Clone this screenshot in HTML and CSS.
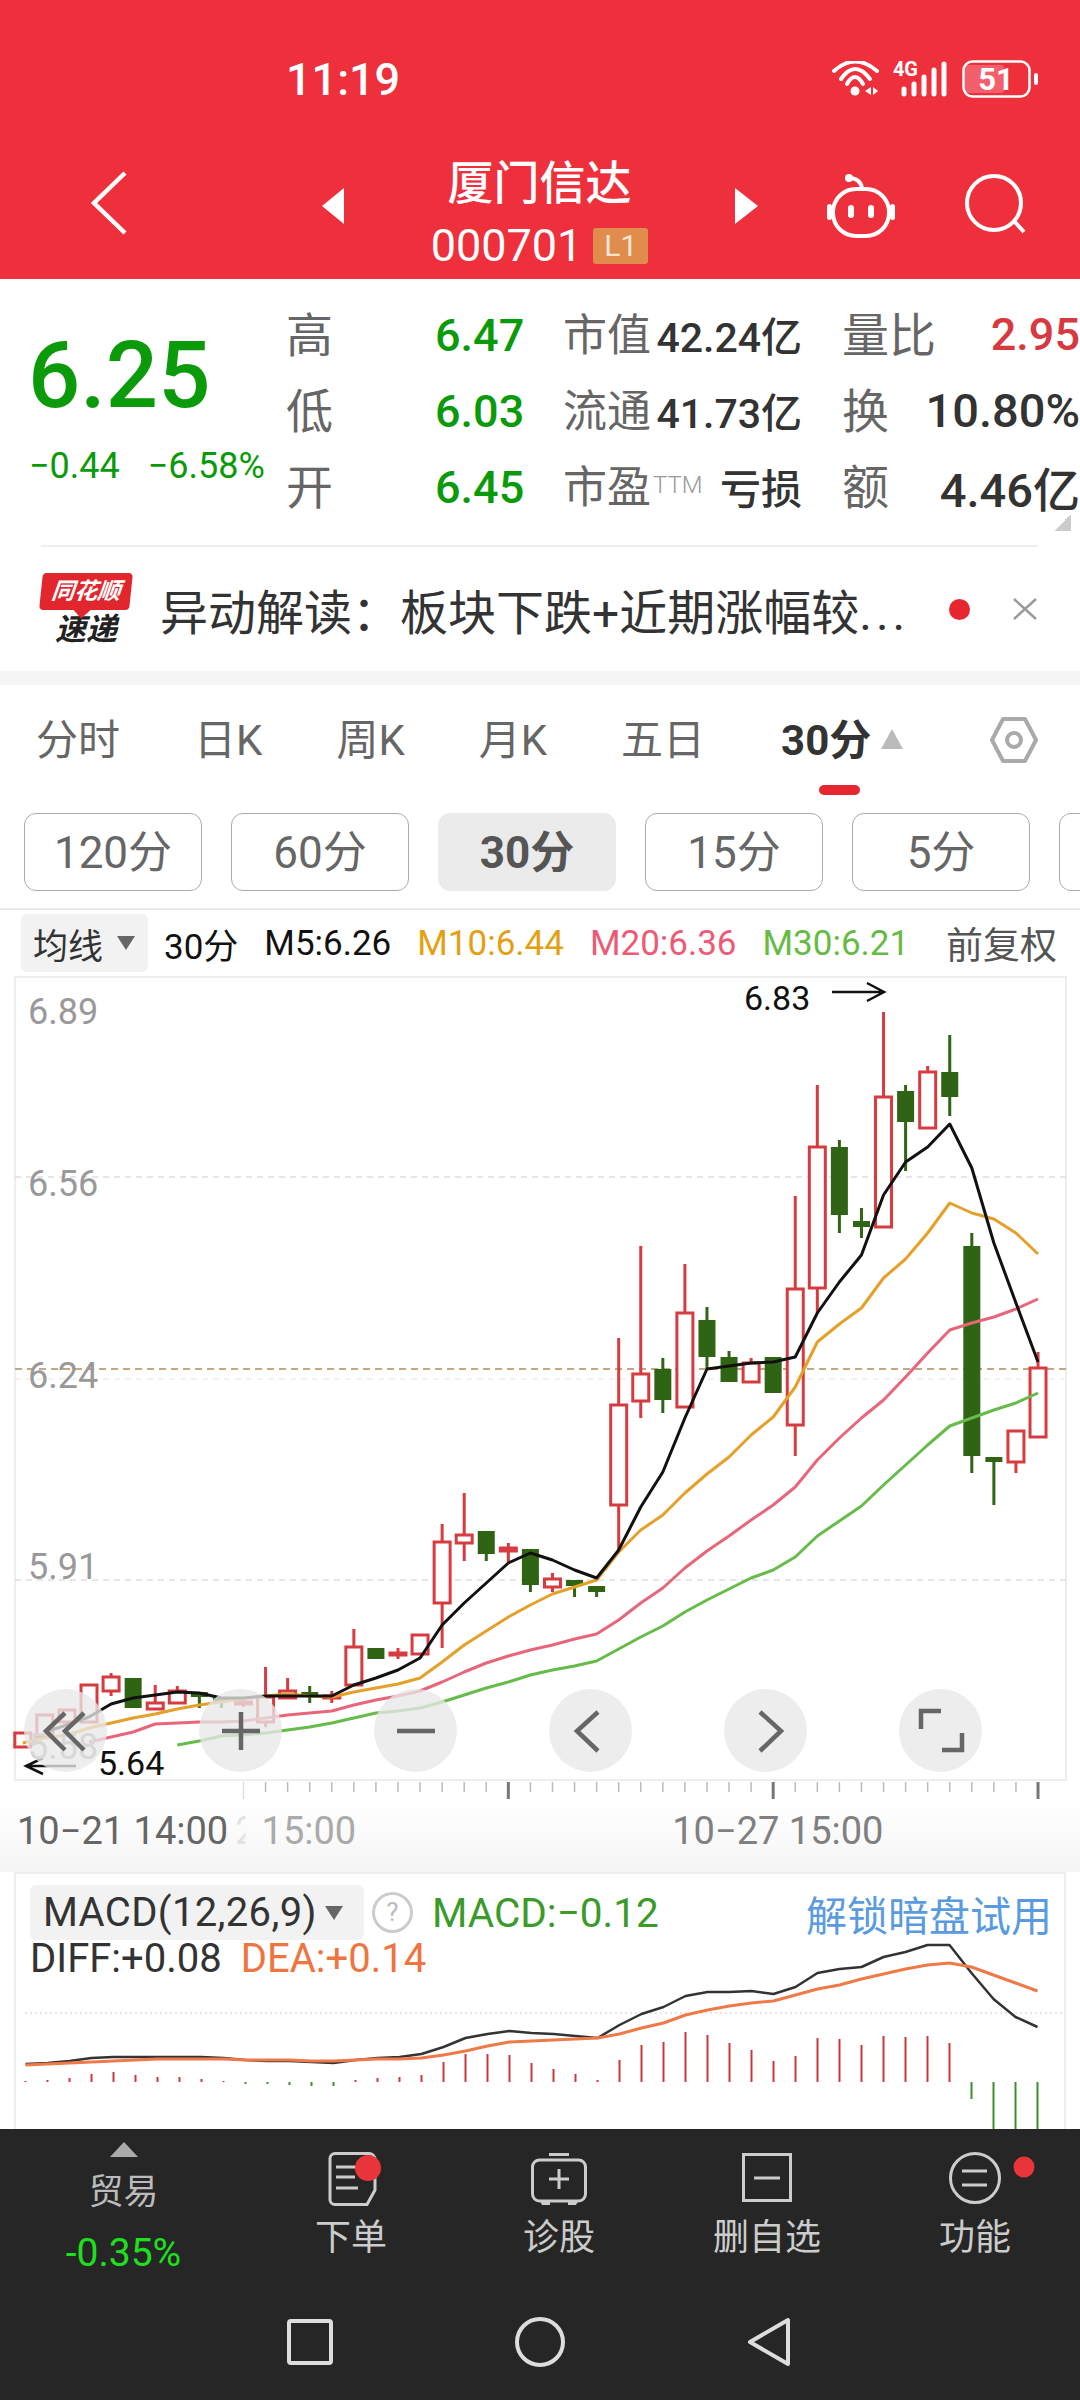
FILE: index.html
```html
<!DOCTYPE html>
<html lang="zh-CN">
<head>
<meta charset="UTF-8">
<meta name="viewport" content="width=device-width, initial-scale=1.0">
<title>厦门信达</title>
<link rel="stylesheet" href="styles.css">
</head>
<body>

<!-- 顶部红色区域 -->
<header class="top">
    <div class="status">
        <span class="clock">11:19</span>
        <svg class="wifi" width="47" height="35" viewBox="0 0 47 35">
            <g fill="none" stroke="#fff" stroke-width="4" stroke-linecap="round">
                <path d="M2 10Q23 -9 45 10"/>
                <path d="M9 18Q23 -2 38 18"/>
                <path d="M15 23Q23 9 31 23"/>
            </g>
            <circle cx="23" cy="30" r="4.5" fill="#fff"/>
            <path d="M33 30l6-4v8zM41 26l5 4-5 4z" fill="#fff"/>
        </svg>
        <svg class="signal" width="55" height="44" viewBox="0 -4 55 44">
            <text x="0" y="15" class="signal-text" textLength="25">4G</text>
            <g fill="none" stroke="#fff" stroke-width="5" stroke-linecap="round">
                <path d="M11 28v5M21 23v10M31 16v17M41 9v24M51 3v30"/>
            </g>
        </svg>
        <svg class="battery" width="76" height="38" viewBox="0 0 76 38">
            <rect x="3" y="5" width="39" height="28" rx="3" fill="#f2606b"/>
            <rect x="1.5" y="1.5" width="66" height="35" rx="9" fill="none" stroke="#fff" stroke-width="2.5"/>
            <text x="34" y="30" class="battery-text" text-anchor="middle">51</text>
            <rect x="72" y="13" width="4" height="12" rx="2" fill="#fff"/>
        </svg>
    </div>
    <div class="toolbar">
        <svg class="back" width="36" height="64" viewBox="0 0 36 64">
            <path d="M34 2L3 32l31 30" fill="none" stroke="#fff" stroke-width="4.5"/>
        </svg>
        <svg class="prev" width="22" height="36" viewBox="0 0 22 36"><path d="M22 0v36L0 18z" fill="#fff"/></svg>
        <div class="stock">
            <div class="stock-name">厦门信达</div>
            <div class="stock-code">000701<span class="level">L1</span></div>
        </div>
        <svg class="next" width="23" height="36" viewBox="0 0 23 36"><path d="M0 0v36l23-18z" fill="#fff"/></svg>
        <svg class="robot" width="68" height="64" viewBox="0 0 68 64">
            <g fill="none" stroke="#fff" stroke-width="4">
                <path d="M22 4q11 0 13 10"/>
                <rect x="6" y="15" width="56" height="47" rx="23"/>
            </g>
            <circle cx="22" cy="4" r="4" fill="#fff"/>
            <rect x="0" y="30" width="5" height="16" rx="2.5" fill="#fff"/>
            <rect x="63" y="30" width="5" height="16" rx="2.5" fill="#fff"/>
            <rect x="21" y="31" width="6" height="13" rx="3" fill="#fff"/>
            <rect x="41" y="31" width="6" height="13" rx="3" fill="#fff"/>
        </svg>
        <svg class="search" width="62" height="64" viewBox="0 0 62 64">
            <circle cx="29" cy="29" r="27" fill="none" stroke="#fff" stroke-width="4"/>
            <path d="M49 47l10 11" fill="none" stroke="#fff" stroke-width="4"/>
        </svg>
    </div>
</header>

<!-- 行情数据 -->
<section class="quote">
    <div class="price-box">
        <div class="price">6.25</div>
        <div class="change"><span>−0.44</span><span>−6.58%</span></div>
    </div>
    <div class="quote-grid">
        <span class="q-label">高</span><span class="q-val">6.47</span>
        <span class="q-mid"><span class="q-small">市值</span><b>42.24亿</b></span>
        <span class="q-end"><span class="q-label">量比</span><b class="red">2.95</b></span>

        <span class="q-label">低</span><span class="q-val">6.03</span>
        <span class="q-mid"><span class="q-small">流通</span><b>41.73亿</b></span>
        <span class="q-end"><span class="q-label">换</span><b>10.80%</b></span>

        <span class="q-label">开</span><span class="q-val">6.45</span>
        <span class="q-mid"><span class="q-small">市盈<i class="ttm">TTM</i></span><b>亏损</b></span>
        <span class="q-end"><span class="q-label">额</span><b>4.46亿</b></span>
    </div>
    <div class="corner"></div>
</section>

<!-- 速递 -->
<section class="news">
    <div class="logo">
        <div class="logo-tag">同花顺</div>
        <div class="logo-text">速递</div>
    </div>
    <div class="news-text">异动解读：板块下跌+近期涨幅较<span class="dots">...</span></div>
    <span class="news-dot"></span>
    <svg class="news-close" width="26" height="24" viewBox="0 0 26 24">
        <path d="M2 2l22 20M24 2L2 22" fill="none" stroke="#999" stroke-width="2.5"/>
    </svg>
</section>
<div class="band"></div>

<!-- 周期切换 -->
<nav class="tabs">
    <span class="tab">分时</span>
    <span class="tab">日K</span>
    <span class="tab">周K</span>
    <span class="tab">月K</span>
    <span class="tab">五日</span>
    <span class="tab active">30分<i class="tab-arrow"></i></span>
    <svg class="hex" width="48" height="46" viewBox="0 0 48 46">
        <path d="M13 2h22l11 21-11 21H13L2 23z" fill="none" stroke="#aaa" stroke-width="4" stroke-linejoin="round"/>
        <circle cx="24" cy="23" r="7" fill="none" stroke="#aaa" stroke-width="4"/>
    </svg>
</nav>
<div class="periods">
    <span class="period">120分</span>
    <span class="period">60分</span>
    <span class="period active">30分</span>
    <span class="period">15分</span>
    <span class="period">5分</span>
    <span class="period"></span>
</div>

<!-- 均线 -->
<div class="legend">
    <span class="legend-btn">均线<i class="down"></i></span>
    <span class="legend-item l-period">30分</span>
    <span class="legend-item">M5:6.26</span>
    <span class="legend-item m10">M10:6.44</span>
    <span class="legend-item m20">M20:6.36</span>
    <span class="legend-item m30">M30:6.21</span>
    <span class="legend-item fq">前复权</span>
</div>

<!-- K线图 -->
<div class="chart">
    <svg id="kline" class="kline" width="1080" height="824" viewBox="0 976 1080 824"></svg>
    <span class="axis-label y1">6.89</span>
    <span class="axis-label y2">6.56</span>
    <span class="axis-label y3">6.24</span>
    <span class="axis-label y4">5.91</span>
    <span class="axis-label y5">5.58</span>
    <span class="mark hi">6.83</span>
    <span class="mark lo">5.64</span>

    <button class="round r1">
        <svg width="83" height="83" viewBox="0 0 83 83"><path d="M41 24L22 42l19 19M60 24L41 42l19 19" class="ico"/></svg>
    </button>
    <button class="round r2">
        <svg width="83" height="83" viewBox="0 0 83 83"><path d="M23 42h38M42 23v38" class="ico"/></svg>
    </button>
    <button class="round r3">
        <svg width="83" height="83" viewBox="0 0 83 83"><path d="M23 42h38" class="ico"/></svg>
    </button>
    <button class="round r4">
        <svg width="83" height="83" viewBox="0 0 83 83"><path d="M49 23L28 42l21 20" class="ico"/></svg>
    </button>
    <button class="round r5">
        <svg width="83" height="83" viewBox="0 0 83 83"><path d="M36 23l21 19-21 20" class="ico"/></svg>
    </button>
    <button class="round r6">
        <svg width="83" height="83" viewBox="0 0 83 83"><path d="M42 22H22v18M43 61h20V44" class="ico"/></svg>
    </button>
</div>

<div class="times">
    <span class="time t1">10−21 14:00</span>
    <span class="time t2">2</span>
    <span class="time t3">15:00</span>
    <span class="time t4">10−27 15:00</span>
</div>

<!-- MACD -->
<section class="macd">
    <svg id="macdChart" class="macd-chart" width="1050" height="255" viewBox="16 1874 1050 255"></svg>
    <div class="macd-head">
        <span class="macd-btn">MACD(12,26,9)<i class="down"></i></span>
        <span class="help">?</span>
        <span class="macd-val">MACD:−0.12</span>
        <span class="unlock">解锁暗盘试用</span>
    </div>
    <div class="macd-sub"><span>DIFF:+0.08</span><span class="dea">DEA:+0.14</span></div>
</section>

<!-- 底部操作栏 -->
<footer class="bottom">
    <div class="actions">
        <div class="trade">
            <i class="trade-arrow"></i>
            <span class="trade-name">贸易</span>
            <span class="trade-val">-0.35%</span>
        </div>
        <div class="action">
            <svg class="doc" width="52" height="54" viewBox="0 0 52 54">
                <path d="M6 1.5H40a6 6 0 0 1 6 6V38L38 52.5H6a5 5 0 0 1-5-5V6.500a5 5 0 0 1 5-5z" class="line"/>
                <path d="M7 15h22M7 25h19M7 36h22" class="line"/>
                <circle cx="39" cy="16" r="13" fill="#e8343a"/>
            </svg>
            <span>下单</span>
        </div>
        <div class="action">
            <svg width="56" height="54" viewBox="0 0 56 54">
                <rect x="1.500" y="8" width="53" height="41" rx="7" class="line"/>
                <path d="M18 2.500H38M18 27h20M28 17v20" class="line"/>
                <path d="M9 49h10v4H11zM37 49h10l-2 4h-8z" fill="#ccc"/>
            </svg>
            <span>诊股</span>
        </div>
        <div class="action">
            <svg width="50" height="54" viewBox="0 0 50 54">
                <rect x="1.500" y="2.500" width="47" height="46" class="line"/>
                <path d="M12 26h26" class="line"/>
            </svg>
            <span>删自选</span>
        </div>
        <div class="action">
            <svg width="52" height="54" viewBox="0 0 52 54">
                <circle cx="26" cy="26" r="24.500" class="line"/>
                <path d="M13 19h25M13 33h25" class="line"/>
                <circle cx="75" cy="15" r="10.500" fill="#e8343a"/>
            </svg>
            <span>功能</span>
        </div>
    </div>
    <div class="navbar">
        <svg class="nav-a" width="46" height="46" viewBox="0 0 46 46"><rect x="2" y="2" width="42" height="42" rx="2" class="nav-line"/></svg>
        <svg class="nav-b" width="50" height="50" viewBox="0 0 50 50"><circle cx="25" cy="25" r="23" class="nav-line"/></svg>
        <svg class="nav-c" width="44" height="50" viewBox="0 0 44 50"><path d="M41 3v44L3 25z" class="nav-line"/></svg>
    </div>
</footer>

<script src="chart.js"></script>
</body>
</html>
```

FILE: styles.css
```css
* {
    box-sizing: border-box;
}

body {
    width: 1080px;
    height: 2400px;
    margin: 0;
    overflow: hidden;
    background-color: #fff;
    font-family: Roboto, "Noto Sans CJK SC", sans-serif;
    color: #333;
}

i {
    font-style: normal;
}

/* 顶部 */
.top {
    height: 279px;
    background-color: #ee303c;
    color: #fff;
}

.status {
    display: flex;
    align-items: center;
    height: 158px;
    padding-left: 286px;
}

.clock {
    width: 114px;
    margin-right: 432px;
    font-size: 45px;
    font-weight: 500;
    white-space: nowrap;
}

.wifi {
    margin-top: -1px;
}

.signal {
    margin-left: 14px;
}

.signal-text {
    font-size: 20px;
    font-weight: 700;
    fill: #fff;
}

.battery {
    margin-left: 14px;
}

.battery-text {
    font-size: 31px;
    font-weight: 700;
    fill: #fff;
}

.toolbar {
    display: flex;
    align-items: center;
    height: 121px;
    padding-bottom: 25px;
    padding-left: 91px;
}

.back {
    margin-top: -6px;
}

.prev {
    margin-left: 195px;
}

.stock {
    width: 391px;
    margin-top: 8px;
    text-align: center;
}

.stock-name {
    font-size: 46px;
    font-weight: 500;
    line-height: 60px;
}

.stock-code {
    display: flex;
    justify-content: center;
    align-items: center;
    margin-top: 11px;
    font-size: 45px;
    line-height: 44px;
}

.level {
    width: 55px;
    height: 36px;
    margin-left: 11px;
    border-radius: 3px;
    background-color: #e08c4c;
    color: #fbe6d3;
    font-size: 30px;
    line-height: 36px;
}

.robot {
    margin-left: 69px;
}

.search {
    margin-left: 70px;
}

/* 行情 */
.quote {
    position: relative;
    display: flex;
    height: 268px;
    padding-top: 17px;
}

.price-box {
    width: 286px;
    padding-left: 28px;
    color: #0a9a0a;
}

.price {
    margin-top: 20px;
    font-size: 92px;
    font-weight: 500;
    line-height: 120px;
}

.change {
    display: flex;
    gap: 28px;
    margin-top: 8px;
    padding-left: 1px;
    font-size: 36px;
    line-height: 44px;
    white-space: nowrap;
}

.quote-grid {
    display: grid;
    flex: 1;
    grid-template-columns: 149px 128px 279px 1fr;
    grid-auto-rows: 76px;
    align-items: center;
}

.q-label {
    margin-top: -6px;
    color: #666;
    font-size: 47px;
}

.q-val {
    margin-top: 2px;
    color: #0a9a0a;
    font-size: 45px;
    font-weight: 500;
}

.q-mid {
    display: flex;
    justify-content: space-between;
    align-items: center;
    padding-right: 40px;
}

.q-small {
    margin-top: -4px;
    color: #666;
    font-size: 44px;
}

.q-mid b, .q-end b {
    color: #333;
    font-size: 41px;
    font-weight: 500;
}

.q-end {
    display: flex;
    justify-content: space-between;
    align-items: center;
}

.q-end b {
    font-size: 47px;
}

.q-end .red {
    color: #d8393f;
    font-size: 45px;
}

.ttm {
    margin-left: 2px;
    color: #999;
    font-size: 24px;
    font-weight: 300;
    vertical-align: 10px;
}

.corner {
    position: absolute;
    right: 9px;
    bottom: 16px;
    width: 17px;
    height: 17px;
    background: linear-gradient(135deg, transparent 50%, #ccc 50%);
}

/* 速递 */
.news {
    position: relative;
    display: flex;
    align-items: center;
    height: 124px;
    padding-left: 41px;
}

.news::before {
    content: "";
    position: absolute;
    top: -2px;
    left: 41px;
    right: 42px;
    height: 2px;
    background-color: #eee;
}

.logo {
    width: 90px;
    text-align: center;
}

.logo-tag {
    position: relative;
    height: 37px;
    border-radius: 4px;
    background-color: #e2262d;
    color: #fff;
    font-size: 23px;
    font-style: italic;
    font-weight: 700;
    line-height: 37px;
    transform: skewX(-6deg);
}

.logo-tag::after {
    content: "";
    position: absolute;
    left: 37px;
    bottom: -6px;
    width: 12px;
    height: 12px;
    background-color: #e2262d;
    transform: rotate(45deg);
}

.logo-text {
    margin-top: 4px;
    color: #222;
    font-size: 31px;
    font-style: italic;
    font-weight: 700;
    line-height: 32px;
}

.news-text {
    width: 787px;
    margin-left: 29px;
    color: #333;
    font-size: 48px;
    white-space: nowrap;
}

.dots {
    letter-spacing: 4px;
}

.news-dot {
    width: 21px;
    height: 21px;
    margin-left: 2px;
    border-radius: 50%;
    background-color: #e8262f;
}

.news-close {
    margin-left: 42px;
}

.band {
    height: 14px;
    background-color: #f5f5f5;
}

/* 周期 */
.tabs {
    display: flex;
    gap: 74px;
    height: 128px;
    padding: 34px 42px 0 36px;
}

.tab {
    position: relative;
    height: 44px;
    color: #666;
    font-size: 42px;
    line-height: 44px;
    white-space: nowrap;
}

.tab.active {
    margin-left: 2px;
    color: #333;
    font-weight: 700;
}

.tab.active::after {
    content: "";
    position: absolute;
    top: 66px;
    left: 38px;
    width: 41px;
    height: 10px;
    border-radius: 5px;
    background-color: #e6272f;
}

.tab-arrow {
    display: inline-block;
    margin-left: 10px;
    vertical-align: 6px;
    border-left: 11px solid transparent;
    border-right: 11px solid transparent;
    border-bottom: 20px solid #bbb;
}

.hex {
    margin-left: auto;
    margin-top: -2px;
}

.periods {
    display: flex;
    gap: 29px;
    height: 97px;
    padding-left: 24px;
    overflow: hidden;
    border-bottom: 2px solid #e8e8e8;
}

.period {
    flex: none;
    width: 178px;
    height: 78px;
    border: 1.5px solid #aaa;
    border-radius: 12px;
    color: #666;
    font-size: 44px;
    line-height: 78px;
    text-align: center;
}

.period.active {
    border-color: #ebebeb;
    background-color: #ebebeb;
    color: #555;
    font-weight: 700;
}

/* 均线 */
.legend {
    display: flex;
    align-items: center;
    height: 66px;
    padding: 0 23px 0 21px;
    color: #111;
    font-size: 35px;
}

.legend-btn {
    display: flex;
    align-items: center;
    width: 127px;
    height: 58px;
    padding-left: 12px;
    border-radius: 6px;
    background-color: #f2f2f2;
    color: #333;
    font-size: 35px;
}

.down {
    display: inline-block;
    margin-left: 14px;
    border-left: 9px solid transparent;
    border-right: 9px solid transparent;
    border-top: 14px solid #666;
}

.legend-item {
    margin-left: 26px;
    white-space: nowrap;
}

.l-period {
    margin-left: 16px;
}

.m10 {
    color: #e5a012;
}

.m20 {
    color: #ee5a76;
}

.m30 {
    color: #66bb44;
}

.fq {
    margin-left: auto;
    color: #555;
    font-size: 37px;
}

/* K线 */
.chart {
    position: relative;
    height: 825px;
}

.kline {
    display: block;
}

.axis-label {
    position: absolute;
    left: 28px;
    color: #999;
    font-size: 36px;
    line-height: 40px;
}

.y1 { top: 16px; }
.y2 { top: 188px; }
.y3 { top: 380px; }
.y4 { top: 571px; }
.y5 { top: 751px; }

.mark {
    position: absolute;
    color: #111;
    font-size: 34px;
    line-height: 40px;
}

.hi {
    top: 2px;
    left: 744px;
}

.lo {
    top: 767px;
    left: 98px;
}

.round {
    position: absolute;
    top: 713px;
    width: 83px;
    height: 83px;
    padding: 0;
    border: none;
    border-radius: 50%;
    background-color: rgba(232, 232, 232, 0.78);
}

.round svg {
    display: block;
}

.r1 { left: 24px; }
.r2 { left: 199px; }
.r3 { left: 374px; }
.r4 { left: 549px; }
.r5 { left: 724px; }
.r6 { left: 899px; }

.ico {
    fill: none;
    stroke: #666;
    stroke-width: 4.5;
}

.times {
    display: flex;
    height: 71px;
    padding: 8px 0 0 17px;
    background: linear-gradient(#fff, #f5f5f5);
    font-size: 38px;
    line-height: 44px;
}

.time {
    white-space: nowrap;
}

.t1 {
    color: #666;
}

/* 上一个日期淡出，只剩半个字 */
.t2 {
    margin-left: 7px;
    color: #e2e2e2;
    -webkit-mask-image: linear-gradient(to right, #000 45%, transparent 50%);
    mask-image: linear-gradient(to right, #000 45%, transparent 50%);
}

.t3 {
    margin-left: 5px;
    color: #aaa;
}

.t4 {
    margin-left: 316px;
    color: #808080;
}

/* MACD */
.macd {
    position: relative;
    height: 257px;
    margin: 0 14px;
    padding: 11px 0 0 14px;
    overflow: hidden;
    border-top: 2px solid #eee;
    border-left: 2px solid #eee;
    border-right: 2px solid #eee;
}

.macd-chart {
    position: absolute;
    top: 0;
    left: 0;
}

.macd-head {
    position: relative;
    display: flex;
    align-items: center;
    height: 55px;
}

.macd-btn {
    display: flex;
    align-items: center;
    width: 334px;
    height: 55px;
    padding-left: 13px;
    border-radius: 6px;
    background-color: #f2f2f2;
    color: #333;
    font-size: 40px;
    letter-spacing: 0.35px;
    white-space: nowrap;
}

.macd-btn .down {
    margin-left: 8px;
}

.help {
    width: 41px;
    height: 41px;
    margin-left: 8px;
    border: 3px solid #ccc;
    border-radius: 50%;
    color: #bbb;
    font-size: 26px;
    line-height: 35px;
    text-align: center;
}

.macd-val {
    margin-left: 19px;
    color: #3a9a2a;
    font-size: 40.500px;
    white-space: nowrap;
}

.unlock {
    margin-left: auto;
    margin-right: 12px;
    color: #5a9be0;
    font-size: 41px;
    white-space: nowrap;
}

.macd-sub {
    position: relative;
    display: flex;
    gap: 19px;
    padding-left: 0;
    color: #333;
    font-size: 40px;
    line-height: 38px;
}

.dea {
    color: #ee7440;
}

/* 底部 */
.bottom {
    height: 271px;
    background-color: #262626;
}

.actions {
    display: flex;
    height: 180px;
}

.trade {
    display: flex;
    flex-direction: column;
    align-items: center;
    width: 247px;
    padding-top: 13px;
}

.trade-arrow {
    border-left: 14px solid transparent;
    border-right: 14px solid transparent;
    border-bottom: 15px solid #aaa;
}

.trade-name {
    margin-top: 16px;
    color: #bbb;
    font-size: 35px;
    line-height: 40px;
}

.trade-val {
    margin-top: 18px;
    color: #1fe01f;
    font-size: 39px;
    line-height: 44px;
}

.action {
    display: flex;
    flex-direction: column;
    align-items: center;
    width: 208px;
    padding-top: 23px;
    color: #ccc;
    font-size: 36px;
    line-height: 40px;
}

.action svg {
    overflow: visible;
    margin-bottom: 12px;
}

.action .doc {
    margin-left: 8px;
}

.line {
    fill: none;
    stroke: #ccc;
    stroke-width: 3;
}

.navbar {
    display: flex;
    align-items: center;
    height: 91px;
    padding: 0 0 26px 287px;
}

.nav-line {
    fill: none;
    stroke: #ddd;
    stroke-width: 4;
    stroke-linejoin: round;
}

.nav-b {
    margin-left: 182px;
}

.nav-c {
    margin-left: 182px;
}
```

FILE: chart.js
```js
var RED = "#d63b3f";
var GREEN = "#2f6415";

// [影线上, 实体上, 实体下, 影线下, 涨=1/跌=0]，都是页面纵坐标
var candles = [
    [1733,1733,1747,1747,1],[1715,1715,1737,1737,1],[1710,1710,1722,1726,1],[1685,1685,1722,1722,1],
    [1673,1677,1691,1696,1],[1678,1678,1708,1708,0],[1685,1703,1709,1709,1],[1686,1691,1703,1703,1],
    [1692,1692,1697,1708,0],[1698,1698,1702,1708,0],[1698,1702,1704,1707,1],[1667,1697,1722,1727,1],
    [1678,1691,1698,1698,1],[1686,1692,1695,1703,0],[1691,1696,1698,1703,1],[1629,1647,1685,1685,1],
    [1648,1648,1659,1659,0],[1648,1653,1655,1659,1],[1635,1635,1654,1654,1],[1524,1542,1603,1648,1],
    [1493,1535,1543,1561,1],[1531,1531,1554,1561,0],[1543,1548,1551,1563,1],[1549,1549,1585,1592,0],
    [1573,1579,1587,1592,1],[1580,1580,1586,1597,0],[1586,1586,1592,1597,0],[1338,1405,1505,1550,1],
    [1246,1374,1401,1418,1],[1358,1369,1400,1413,0],[1264,1313,1407,1407,1],[1307,1320,1357,1368,0],
    [1351,1357,1382,1382,0],[1358,1363,1382,1382,1],[1357,1357,1393,1393,0],[1196,1289,1425,1456,1],
    [1085,1147,1288,1313,1],[1140,1147,1215,1233,0],[1208,1221,1227,1238,0],[1012,1097,1227,1227,1],
    [1085,1091,1122,1171,0],[1066,1072,1128,1128,1],[1035,1072,1097,1116,0],[1233,1246,1456,1473,0],
    [1457,1457,1462,1505,0],[1431,1431,1462,1473,1],[1352,1368,1437,1437,1]
];

// 均线：first 是起始根数
var maLines = [
    { color: "#e8667a", first: 3, ys: [1742,1737,1732,1724,1723,1722,1722,1721,1718,1715,1713,1711,1705,1700,1696,1691,1682,1672,1663,1656,1650,1645,1639,1634,1620,1603,1588,1568,1551,1536,1520,1505,1487,1460,1438,1418,1400,1377,1353,1330,1323,1317,1309,1299] },
    { color: "#66bb4a", first: 7, ys: [1745,1741,1736,1735,1733,1730,1727,1723,1718,1713,1711,1708,1702,1695,1688,1682,1675,1670,1666,1661,1649,1637,1626,1612,1600,1589,1578,1570,1557,1536,1521,1506,1485,1465,1445,1426,1418,1410,1403,1393] },
    { color: "#e5a02a", first: 0, ys: [1743,1738,1735,1728,1723,1718,1714,1709,1705,1702,1699,1696,1694,1696,1697,1692,1688,1684,1678,1662,1645,1631,1617,1605,1594,1587,1580,1552,1530,1515,1493,1474,1457,1435,1417,1387,1342,1324,1308,1278,1259,1233,1203,1213,1219,1233,1254] },
    { color: "#111", first: 1, ys: [1732,1725,1717,1704,1698,1695,1692,1693,1698,1698,1696,1696,1696,1696,1685,1678,1670,1658,1625,1603,1583,1563,1553,1560,1570,1578,1550,1507,1472,1418,1369,1366,1363,1362,1357,1313,1282,1255,1195,1162,1147,1124,1168,1243,1303,1362] }
];

var macdBars = [1,2,4,8,10,7,5,5,3,1,-2,-2,-3,-4,-4,2,4,5,7,20,28,28,27,19,13,8,2,22,37,40,50,47,39,32,21,26,44,43,37,46,45,46,39,-17,-50,-50,-50];
var diff = [2064,2063,2061,2058,2057,2057,2057,2057,2057,2058,2060,2061,2061,2062,2063,2060,2058,2057,2054,2047,2038,2034,2031,2033,2034,2036,2038,2025,2014,2007,1996,1992,1992,1991,1994,1987,1973,1969,1967,1957,1952,1945,1945,1973,1999,2017,2027];
var dea = [2065,2064,2063,2062,2061,2060,2059,2059,2059,2059,2060,2060,2060,2061,2061,2060,2059,2059,2058,2055,2051,2046,2042,2041,2040,2039,2038,2034,2028,2023,2015,2010,2006,2003,2001,1995,1989,1985,1979,1974,1969,1965,1963,1967,1975,1983,1991];

function candleX(i) {
    return 22.8 + 22.07 * i;
}

function line(x1, y1, x2, y2, color, width, dash) {
    return '<line x1="' + x1 + '" y1="' + y1 + '" x2="' + x2 + '" y2="' + y2 + '" stroke="' + color +
        '" stroke-width="' + width + '"' + (dash ? ' stroke-dasharray="' + dash + '"' : '') + '/>';
}

function polyline(points, color, width) {
    return '<polyline points="' + points.join(" ") + '" fill="none" stroke="' + color +
        '" stroke-width="' + width + '" stroke-linejoin="round"/>';
}

// 画K线图
function drawKline() {
    var s = "";

    // 边框和网格
    s += line(15, 977, 1066, 977, "#eee", 2);
    s += line(15, 976, 15, 1781, "#eee", 2);
    s += line(1066, 976, 1066, 1781, "#eee", 2);
    s += line(15, 1780, 1066, 1780, "#eee", 2);
    s += line(15, 1177, 1066, 1177, "#ddd", 1.5, "6 5");
    s += line(15, 1379, 1066, 1379, "#eee", 1.5, "6 5");
    s += line(15, 1580, 1066, 1580, "#ddd", 1.5, "6 5");
    s += line(15, 1369, 1066, 1369, "#c4a882", 2, "7 5");

    // 时间刻度
    for (var t = 10; t < candles.length; t++) {
        var major = t === 22 || t === 34 || t === 46;
        var tickColor = major ? "#777" : (t === 10 ? "#ddd" : "#bbb");
        s += line(candleX(t), 1782, candleX(t), (major || t === 10) ? 1799 : 1792, tickColor, major ? 3 : 1.5);
    }

    for (var i = 0; i < candles.length; i++) {
        var c = candles[i];
        var x = candleX(i);
        var color = c[4] ? RED : GREEN;
        if (c[0] < c[1]) s += line(x, c[0], x, c[1], color, 3);
        if (c[3] > c[2]) s += line(x, c[2], x, c[3], color, 3);
        if (c[4]) {
            s += '<rect x="' + (x - 8) + '" y="' + c[1] + '" width="16" height="' + (c[2] - c[1]) +
                '" fill="#fff" stroke="' + RED + '" stroke-width="3"/>';
        } else {
            s += '<rect x="' + (x - 8.5) + '" y="' + c[1] + '" width="17" height="' + (c[2] - c[1]) + '" fill="' + GREEN + '"/>';
        }
    }

    for (var m = 0; m < maLines.length; m++) {
        var points = [];
        for (var k = 0; k < maLines[m].ys.length; k++) {
            points.push(candleX(maLines[m].first + k) + "," + maLines[m].ys[k]);
        }
        s += polyline(points, maLines[m].color, 3);
    }

    // 最高最低箭头
    s += '<path d="M832 992H883M867 983l17 9-17 9" fill="none" stroke="#111" stroke-width="2.5"/>';
    s += '<path d="M76 1766H26M43 1758l-17 8 17 8" fill="none" stroke="#111" stroke-width="2.5"/>';

    document.getElementById("kline").innerHTML = s;
}

// 画MACD
function drawMacd() {
    var s = line(25, 2013, 1064, 2013, "#ddd", 1.5, "2 3");
    var a = [];
    var b = [];
    for (var i = 0; i < macdBars.length; i++) {
        var x = 25.5 + 22 * i;
        var h = macdBars[i];
        s += line(x, 2082 - Math.max(h, 0), x, 2082 - Math.min(h, 0), h > 0 ? "#c8383c" : "#3d8f2b", 2);
        a.push(x + "," + diff[i]);
        b.push(x + "," + dea[i]);
    }
    s += polyline(a, "#333", 2.5);
    s += polyline(b, "#ee7a48", 3);
    document.getElementById("macdChart").innerHTML = s;
}

drawKline();
drawMacd();
```
